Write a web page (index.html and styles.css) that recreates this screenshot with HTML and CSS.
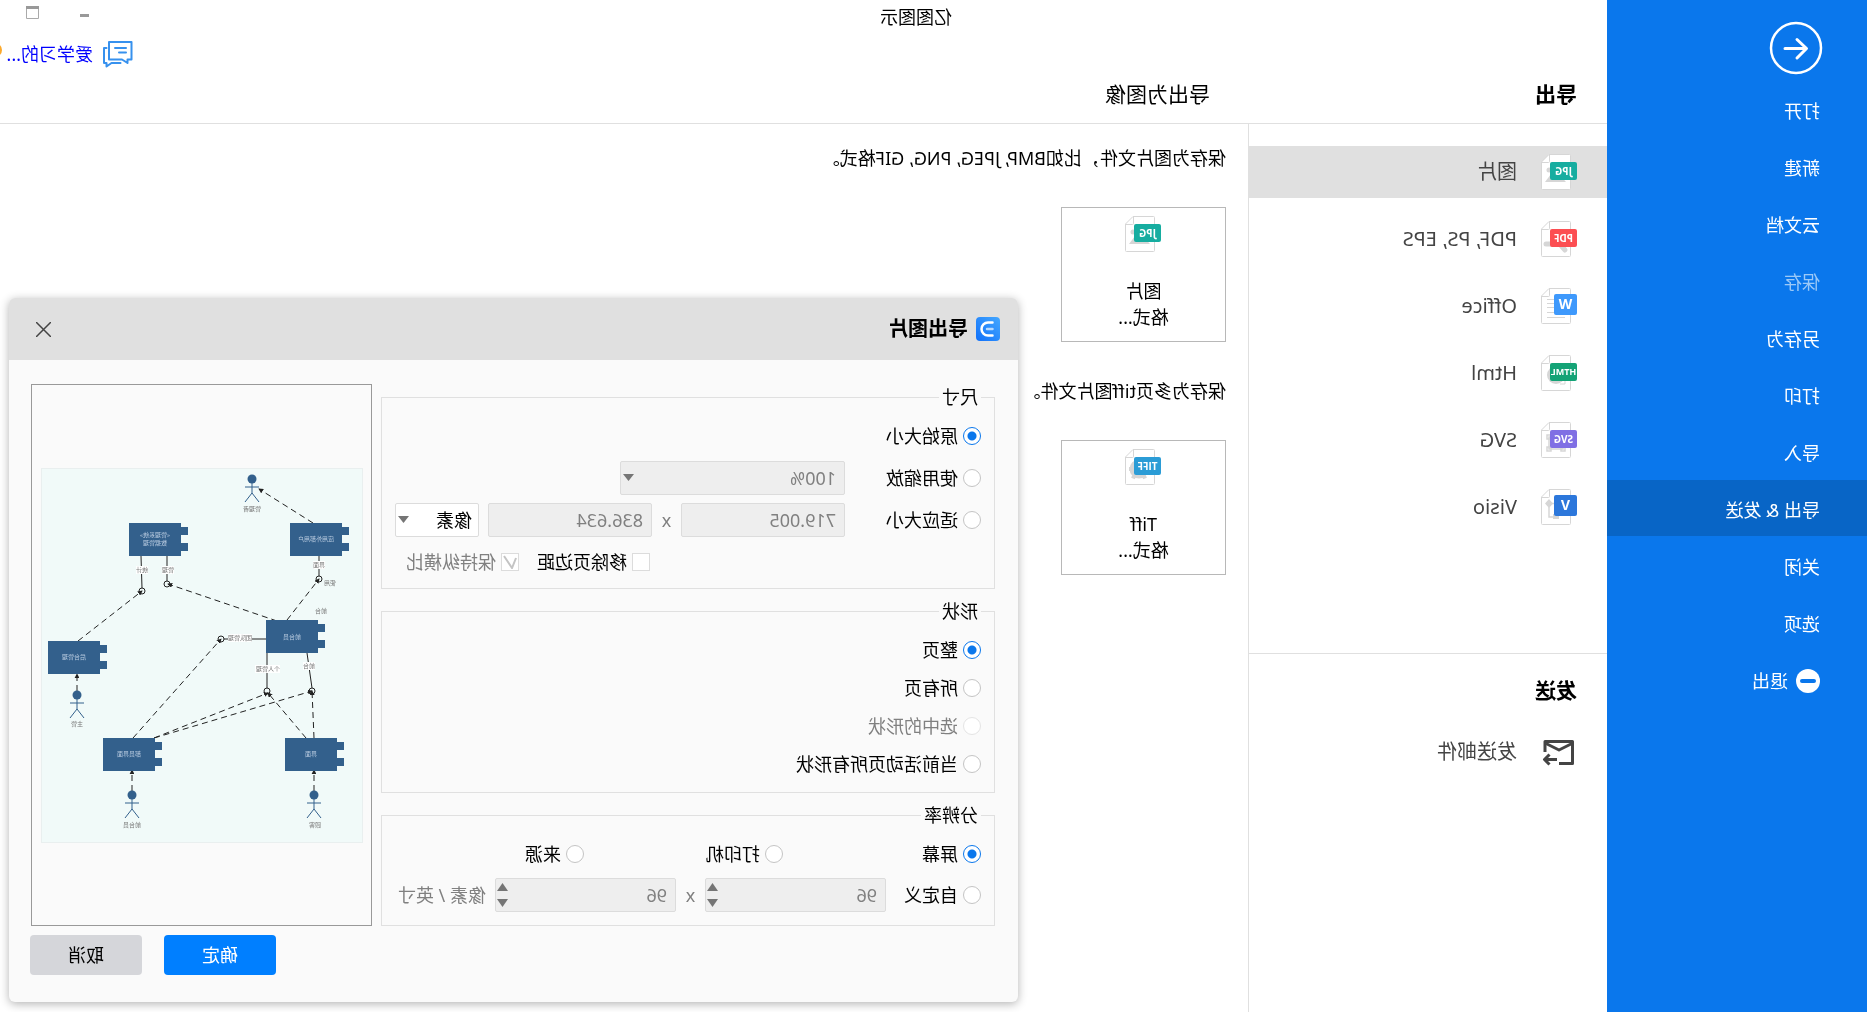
FILE: index.html
```html
<!DOCTYPE html>
<html lang="zh-CN">
<head>
<meta charset="utf-8">
<title>亿图图示</title>
<link rel="stylesheet" href="styles.css">
</head>
<body>
<svg class="defs" width="0" height="0" aria-hidden="true">
  <defs>
    <g id="sheet">
      <path d="M7.500.500H28L35.500 8V34.500a1 1 0 0 1-1 1H7.500a1 1 0 0 1-1-1V1.500a1 1 0 0 1 1-1Z" fill="#fff" stroke="#d6d6d6"/>
      <path d="M27.500.500V7.500a1 1 0 0 0 1 1H35.500" fill="none" stroke="#d6d6d6"/>
    </g>
    <g id="photo" fill="#d6d6d6"><circle cx="28" cy="16" r="2.500"/><path d="M11 28l7-8 5 4 3-4 6 8Z"/></g>
    <g id="caret"><path d="M0 0H11L5.500 7Z" fill="#757575"/></g>
    <g id="actor" fill="none" stroke="#33608c">
      <circle r="4.500" fill="#33608c" stroke="none"/>
      <path d="M0 4V14M-7 8H7M0 14L-7 23M0 14L7 23"/>
    </g>
    <g id="node" fill="#33608c"><path d="M0 0H52V33H0ZM-7 4H0V12H-7ZM-7 20H0V28H-7Z"/></g>
    <marker id="tip" viewBox="0 0 6 6" refX="5" refY="3" markerWidth="5" markerHeight="5" orient="auto"><path d="M0 0L6 3L0 6Z" fill="#222"/></marker>
    <linearGradient id="brand" x1="0" y1="0" x2="1" y2="1"><stop offset="0" stop-color="#45a8ff"/><stop offset="1" stop-color="#1070fa"/></linearGradient>
  </defs>
</svg>

<div class="app">
  <nav class="sidebar">
    <button class="back" type="button" aria-label="返回">
      <svg width="54" height="54" viewBox="0 0 54 54" fill="none" stroke="#fff" stroke-width="3" stroke-linecap="round" stroke-linejoin="round"><circle cx="27" cy="27" r="25" stroke-width="2.500"/><path d="M38 27.500H17M26 18.500L16.500 27.500L26 37"/></svg>
    </button>
    <a class="nav-item" href="#">打开</a>
    <a class="nav-item" href="#">新建</a>
    <a class="nav-item" href="#">云文档</a>
    <a class="nav-item nav-off" href="#">保存</a>
    <a class="nav-item" href="#">另存为</a>
    <a class="nav-item" href="#">打印</a>
    <a class="nav-item" href="#">导入</a>
    <a class="nav-item nav-on" href="#">导出 &amp; 发送</a>
    <a class="nav-item" href="#">关闭</a>
    <a class="nav-item" href="#">选项</a>
    <a class="nav-item" href="#"><svg width="24" height="24" viewBox="0 0 24 24"><circle cx="12" cy="12" r="12" fill="#fff"/><rect x="4" y="10" width="16" height="4" rx="2" fill="#0a77ec"/></svg>退出</a>
  </nav>

  <div class="main">
    <header>
      <div class="titlebar">
        <div class="title">亿图图示</div>
        <div class="controls">
          <button type="button" aria-label="最小化"><svg width="13" height="13" viewBox="0 0 13 13"><path d="M2 9.500H11" stroke="#999" stroke-width="3"/></svg></button>
          <button type="button" aria-label="最大化"><svg width="13" height="13" viewBox="0 0 13 13"><path d="M.5 1V12.500H12.500V1" fill="none" stroke="#aaa"/><path d="M0 1.500H13" stroke="#999" stroke-width="3"/></svg></button>
        </div>
      </div>
      <div class="userbar">
        <svg width="30" height="27" viewBox="0 0 30 27" fill="none" stroke="#3791ee" stroke-width="2" stroke-linejoin="round" stroke-linecap="round"><path d="M1.500 1H24V18.500H11L5.500 22V18.500H1.500ZM7 7H18M7 11.500H14M26.500 7H29V22H26.500V25.500L21.500 22H12.500"/></svg>
        <a href="#">爱学习的...</a>
        <span class="vip"></span>
      </div>
      <div class="headings">
        <h1>导出</h1>
        <h2>导出为图像</h2>
      </div>
    </header>

    <div class="columns">
      <aside class="formats">
        <div class="group">
          <a class="format format-on" href="#"><svg width="36" height="36" viewBox="0 0 36 36"><use href="#sheet"/><use href="#photo"/><rect y="8" width="27" height="18" rx="2" fill="#16ada0"/><text class="tag" x="13.500" y="20.500">JPG</text></svg>图片</a>
          <a class="format" href="#"><svg width="36" height="36" viewBox="0 0 36 36"><use href="#sheet"/><path d="M12 29l8-9M26 23h5" stroke="#d6d6d6" stroke-width="5" stroke-linecap="round"/><rect y="8" width="27" height="18" rx="2" fill="#fc4e52"/><text class="tag" x="13.500" y="20.500">PDF</text></svg>PDF, PS, EPS</a>
          <a class="format" href="#"><svg width="36" height="36" viewBox="0 0 36 36"><use href="#sheet"/><path d="M12 11.500H30M12 15.500H30M12 19.500H30M12 24.500H30M12 29.500H30" stroke="#d6d6d6"/><rect y="6" width="23" height="21" rx="2" fill="#3e99fc"/><text class="tag tag-big" x="11.500" y="21">W</text></svg>Office</a>
          <a class="format" href="#"><svg width="36" height="36" viewBox="0 0 36 36"><use href="#sheet"/><circle cx="21" cy="20" r="9" fill="#d6d6d6"/><path d="M12 20V29H17" fill="none" stroke="#d6d6d6"/><rect y="8" width="27" height="18" rx="2" fill="#14a376"/><text class="tag tag-small" x="13.500" y="20">HTML</text></svg>Html</a>
          <a class="format" href="#"><svg width="36" height="36" viewBox="0 0 36 36"><use href="#sheet"/><path d="M14 15H28V27H14ZM26 13h4v4h-4ZM12 25h4v4h-4ZM26 25h4v4h-4Z" fill="#fff" stroke="#d6d6d6" stroke-width="1.500"/><rect y="8" width="27" height="18" rx="2" fill="#806fe4"/><text class="tag" x="13.500" y="20.500">SVG</text></svg>SVG</a>
          <a class="format" href="#"><svg width="36" height="36" viewBox="0 0 36 36"><use href="#sheet"/><path d="M22 14.500H28V28H20" fill="none" stroke="#d6d6d6" stroke-width="1.500"/><path d="M28 10l4 4.500-4 4.500-4-4.500ZM18 25h6v5h-6Z" fill="#d6d6d6"/><rect y="6" width="23" height="21" rx="2" fill="#2c77db"/><text class="tag tag-big" x="11.500" y="21">V</text></svg>Visio</a>
        </div>
        <div class="send">
          <h1>发送</h1>
          <a class="format" href="#"><svg width="36" height="36" viewBox="0 0 36 36" fill="none" stroke="#444" stroke-width="3" stroke-linejoin="round"><path d="M18 29.500H4.500V7.500H32V18"/><path d="M5 9.500L18 16L31 9.500"/><path d="M20 25.500H32M27.500 20.500L32.500 25.500L27.500 30.500"/></svg>发送邮件</a>
        </div>
      </aside>

      <section class="content">
        <p>保存为图片文件，比如BMP, JPEG, PNG, GIF格式。</p>
        <button class="tile" type="button">
          <svg width="36" height="36" viewBox="0 0 36 36"><use href="#sheet"/><use href="#photo"/><rect y="8" width="27" height="18" rx="2" fill="#16ada0"/><text class="tag" x="13.500" y="20.500">JPG</text></svg>
          <span>图片<br>格式...</span>
        </button>
        <p>保存为多页tiff图片文件。</p>
        <button class="tile" type="button">
          <svg width="36" height="36" viewBox="0 0 36 36"><use href="#sheet"/><circle cx="22" cy="20" r="7" fill="none" stroke="#d6d6d6" stroke-width="5"/><path d="M17 27l-1 2.500M27 27l1 2.500M29 20h3" stroke="#d6d6d6" stroke-width="4"/><rect y="8" width="27" height="18" rx="2" fill="#2b9cd6"/><text class="tag" x="13.500" y="20.500">TIFF</text></svg>
          <span>Tiff<br>格式...</span>
        </button>
      </section>
    </div>
  </div>

  <form class="dialog" role="dialog" aria-labelledby="dialog-title">
    <div class="dialog-head">
      <svg width="24" height="24" viewBox="0 0 24 24" fill="none" stroke-linecap="round"><rect width="24" height="24" rx="4" fill="url(#brand)"/><path d="M7.500 5.500H12A6.500 6.500 0 0 1 12 18.500H7.500" stroke="#fff" stroke-width="2.500"/><path d="M7.500 12H13" stroke="#b8daff" stroke-width="2.500"/></svg>
      <h2 id="dialog-title">导出图片</h2>
      <button class="close" type="button" aria-label="关闭"><svg width="15" height="15" viewBox="0 0 15 15"><path d="M0 0L15 15M15 0L0 15" stroke="#444" stroke-width="1.500"/></svg></button>
    </div>
    <div class="dialog-body">
      <div class="options">
        <fieldset class="size">
          <legend>尺寸</legend>
          <div class="row"><label class="choice"><input type="radio" name="size" checked>原始大小</label></div>
          <div class="row">
            <label class="choice"><input type="radio" name="size">使用缩放</label>
            <span class="select zoom"><select aria-label="缩放" disabled><option>100%</option></select><svg width="11" height="8"><use href="#caret"/></svg></span>
          </div>
          <div class="row">
            <label class="choice"><input type="radio" name="size">适应大小</label>
            <input class="field" type="text" value="719.005" aria-label="宽度" disabled>
            <span class="times">x</span>
            <input class="field" type="text" value="836.634" aria-label="高度" disabled>
            <span class="select unit"><select aria-label="单位"><option>像素</option></select><svg width="11" height="8"><use href="#caret"/></svg></span>
          </div>
          <div class="row checks">
            <label><input type="checkbox">移除页边距</label>
            <label class="off"><input type="checkbox" disabled><svg class="tick" width="14" height="14" viewBox="0 0 14 14"><path d="M1 3L5 13L13 1" fill="none" stroke="#c4c4c4" stroke-width="2"/></svg>保持纵横比</label>
          </div>
        </fieldset>
        <fieldset class="shape">
          <legend>形状</legend>
          <label><input type="radio" name="shape" checked>整页</label>
          <label><input type="radio" name="shape">所有页</label>
          <label class="off"><input type="radio" name="shape" disabled>选中的形状</label>
          <label><input type="radio" name="shape">当前活动页所有形状</label>
        </fieldset>
        <fieldset class="dpi">
          <legend>分辨率</legend>
          <div class="row thirds">
            <label><input type="radio" name="dpi" checked>屏幕</label>
            <label><input type="radio" name="dpi">打印机</label>
            <label><input type="radio" name="dpi">来源</label>
          </div>
          <div class="row">
            <label class="choice"><input type="radio" name="dpi">自定义</label>
            <span class="spin"><input class="field" type="number" value="96" aria-label="水平分辨率" disabled><svg width="11" height="24" viewBox="0 0 11 24" fill="#757575"><path d="M0 8H11L5.500 0ZM0 16H11L5.500 24Z"/></svg></span>
            <span class="times">x</span>
            <span class="spin"><input class="field" type="number" value="96" aria-label="垂直分辨率" disabled><svg width="11" height="24" viewBox="0 0 11 24" fill="#757575"><path d="M0 8H11L5.500 0ZM0 16H11L5.500 24Z"/></svg></span>
            <span class="per">像素 / 英寸</span>
          </div>
        </fieldset>
      </div>
      <div class="preview">
        <svg class="diagram" width="322" height="375" viewBox="0 0 322 375">
          <rect x=".5" y=".5" width="321" height="374" fill="#f1faf9" stroke="#e9efef"/>
          <g fill="none" stroke="#222">
            <path d="M222 88L221 120M196 88V114M44 88V108M97 171H139M96 185V220M56 185L51 220"/>
            <g fill="#f1faf9"><circle cx="221" cy="123" r="3"/><circle cx="196" cy="116" r="3"/><circle cx="44" cy="111" r="3"/><circle cx="142" cy="171" r="3"/><circle cx="96" cy="223" r="3"/><circle cx="51" cy="223" r="3"/></g>
            <g stroke-dasharray="6 4">
              <path d="M50 55L104 21" marker-end="url(#tip)"/>
              <path d="M285 173L221 123" marker-end="url(#tip)"/>
              <path d="M86 153L195 116" marker-end="url(#tip)"/>
              <path d="M76 152L44 111" marker-end="url(#tip)"/>
              <path d="M230 270L142 171" marker-end="url(#tip)"/>
              <path d="M209 270L95 225" marker-end="url(#tip)"/>
              <path d="M209 270L51 223" marker-end="url(#tip)"/>
              <path d="M57 270L95 225" marker-end="url(#tip)"/>
              <path d="M49 270L51 223" marker-end="url(#tip)"/>
              <path d="M286 223V206" marker-end="url(#tip)"/>
              <path d="M231 323V302" marker-end="url(#tip)"/>
              <path d="M49 323V302" marker-end="url(#tip)"/>
            </g>
          </g>
          <use href="#node" x="182" y="55"/><use href="#node" x="21" y="55"/><use href="#node" x="45" y="152"/>
          <use href="#node" x="263" y="173"/><use href="#node" x="208" y="270"/><use href="#node" x="26" y="270"/>
          <use href="#actor" x="111" y="11"/><use href="#actor" x="286" y="227"/><use href="#actor" x="231" y="327"/><use href="#actor" x="49" y="327"/>
          <g fill="#fff">
            <rect x="215" y="98" width="12" height="8"/><rect x="189" y="98" width="12" height="8"/><rect x="38" y="93" width="12" height="8"/>
            <rect x="111" y="166" width="24" height="8"/><rect x="83" y="197" width="25" height="8"/><rect x="48" y="194" width="12" height="8"/>
          </g>
          <g class="node-text">
            <text x="208" y="69">«管理系统»</text><text x="208" y="77">数据管理</text><text x="47" y="73">应用外部用户</text>
            <text x="71" y="171">前台员</text><text x="289" y="191">后台管理</text><text x="234" y="288">部员界面</text><text x="52" y="288">界面</text>
          </g>
          <g class="line-text">
            <text x="111" y="43">管理者</text><text x="286" y="258">主管</text><text x="231" y="359">前台员</text><text x="48" y="359">顾客</text>
            <text x="221" y="104">统计</text><text x="195" y="104">管理</text><text x="44" y="99">界面</text><text x="33" y="117">使用</text>
            <text x="42" y="145">前台</text><text x="123" y="172">团队管理</text><text x="95" y="203">个人管理</text><text x="54" y="200">前台</text>
          </g>
        </svg>
      </div>
    </div>
    <div class="dialog-foot">
      <button class="ok" type="submit">确定</button>
      <button class="cancel" type="button">取消</button>
    </div>
  </form>
</div>
</body>
</html>
```
FILE: styles.css
```css
* { box-sizing: border-box; }

body {
  margin: 0;
  overflow: hidden;
  background: #fff;
  color: #000;
  font: 18px/26px "Noto Sans", "Noto Sans CJK SC", sans-serif;
}

h1, h2, p { margin: 0; }
h1, h2 { font-size: 21px; line-height: 30px; }
a { color: inherit; text-decoration: none; }
button { padding: 0; border: 0; background: none; color: inherit; font: inherit; }
svg { flex: none; }
.defs { position: absolute; }

/* The whole window is laid out right-facing and shown mirrored. */
.app {
  position: relative;
  display: flex;
  min-height: 100vh;
  overflow: hidden;
  transform: scaleX(-1);
}

/* Sidebar */
.sidebar {
  flex: none;
  display: flex;
  flex-direction: column;
  gap: 1px;
  width: 260px;
  background: #0a77ec;
  color: #fff;
}
.back { width: 54px; height: 54px; margin: 21px 0 5px 44px; }
.back svg { display: block; }
.nav-item {
  display: flex;
  align-items: center;
  gap: 8px;
  height: 56px;
  padding: 4px 47px 0;
}
.nav-on { background: #0865c6; }
.nav-off { color: #9cc9f7; }

/* Header */
.main { flex: 1; display: flex; flex-direction: column; min-width: 0; }
.titlebar { display: flex; height: 35px; }
.title { flex: 1; text-align: center; line-height: 34px; }
.controls { display: flex; gap: 39px; width: 225px; padding: 6px 0 0 134px; }
.controls button { width: 13px; height: 13px; }
.controls svg { display: block; }
.userbar {
  display: flex;
  align-items: center;
  justify-content: flex-end;
  gap: 10px;
  height: 38px;
}
.userbar a { width: 86px; color: #00f; white-space: nowrap; }
.vip { width: 14px; height: 14px; margin: -8px -12px 0 -5px; border-radius: 50%; background: #fba92c; }
.headings {
  display: grid;
  grid-template-columns: 367px 1fr;
  height: 51px;
  padding: 6px 30px 0;
  border-bottom: 1px solid #e0e0e0;
}
.headings h2 { font-weight: 400; }

/* Format list */
.columns { flex: 1; display: flex; }
.formats { flex: none; width: 359px; border-right: 1px solid #e0e0e0; }
.group {
  display: flex;
  flex-direction: column;
  gap: 15px;
  min-height: 530px;
  padding-top: 22px;
  border-bottom: 1px solid #e0e0e0;
}
.format {
  display: flex;
  align-items: center;
  gap: 24px;
  height: 52px;
  padding: 0 30px;
  color: #444;
  font-size: 20px;
}
.format-on { background: #e0e0e0; }
.send h1 { padding: 21px 30px 0; }
.send .format { margin-top: 21px; }
.tag { fill: #fff; font: 700 10px "Open Sans", sans-serif; text-anchor: middle; }
.tag-big { font-size: 14px; }
.tag-small { font-size: 9px; }

/* Export targets */
.content { flex: 1; padding: 21px 22px; }
.tile {
  display: flex;
  flex-direction: column;
  align-items: center;
  gap: 26px;
  width: 165px;
  height: 135px;
  margin: 36px 0;
  padding-top: 8px;
  border: 1px solid #b8b8b8;
  line-height: 26px;
}

/* Export dialog, floating above the page */
.dialog {
  position: absolute;
  top: 298px;
  right: 9px;
  width: 1009px;
  border-radius: 6px;
  background: #fafafa;
  box-shadow: 0 2px 10px rgba(0, 0, 0, .3);
}
.dialog-head {
  display: flex;
  align-items: center;
  gap: 8px;
  height: 62px;
  padding: 0 27px 0 18px;
  border-radius: 6px 6px 0 0;
  background: #e0e0e0;
}
.dialog-head svg { display: block; }
.dialog-head h2 { font-size: 20px; }
.close { margin-left: auto; }
.dialog-body {
  display: grid;
  grid-template-columns: 1fr 341px;
  gap: 9px;
  padding: 24px 22px 9px 23px;
}
.options { display: flex; flex-direction: column; gap: 9px; }

fieldset {
  display: flex;
  flex-direction: column;
  gap: 8px;
  min-width: 0;
  margin: 0;
  padding: 9px 13px;
  border: 1px solid #e0e0e0;
}
legend { padding: 0 3px; }
label { display: flex; align-items: center; gap: 5px; white-space: nowrap; }
.row { display: flex; align-items: center; height: 34px; }
.shape { padding: 11px 13px 13px; }
.shape label { height: 30px; }
.dpi { gap: 7px; padding-bottom: 13px; }
.size .choice { width: 136px; }
.dpi .choice { width: 95px; }
.checks { gap: 18px; padding-left: 331px; }
.thirds { display: grid; grid-template-columns: 198px 199px 1fr; }
.off, .per, .times { color: #808080; }
.times { width: 29px; text-align: center; }
.per { margin-left: 9px; white-space: nowrap; }

input[type="radio"],
input[type="checkbox"] {
  appearance: none;
  flex: none;
  width: 18px;
  height: 18px;
  margin: 0;
  border: 1px solid #c4c4c4;
  background: #fff;
}
input[type="radio"] { border-radius: 50%; }
input[type="radio"]:checked {
  border-color: #0a77ec;
  background: radial-gradient(circle, #0a77ec 4px, #fff 5px);
}
input[type="radio"]:disabled { border-color: #e4e4e4; }
input[type="checkbox"] { border-color: #dcdcdc; }
.off { position: relative; }
.tick { position: absolute; left: 2px; top: 6px; }

.field, select {
  appearance: none;
  height: 34px;
  margin: 0;
  padding: 0 8px;
  border: 1px solid #dcdcdc;
  border-radius: 2px;
  background: #fff;
  color: #000;
  font: inherit;
}
.field { width: 164px; }
.field:disabled, select:disabled { background: #eee; color: #808080; opacity: 1; }
.select, .spin { position: relative; display: flex; }
.select select { width: 100%; }
.select svg { position: absolute; right: 3px; top: 13px; }
.zoom { width: 225px; }
.unit { width: 84px; margin-left: 9px; }
.unit select { padding: 0 6px; }
.spin .field { width: 181px; -moz-appearance: textfield; }
.spin .field::-webkit-inner-spin-button { display: none; }
.spin svg { position: absolute; right: 2px; top: 5px; }

.preview {
  display: flex;
  align-items: center;
  justify-content: center;
  padding-right: 2px;
  border: 1px solid #999;
}
.node-text, .line-text { font-size: 6px; text-anchor: middle; }
.node-text { fill: #b9cbe0; }
.line-text { fill: #777; }

.dialog-foot {
  display: flex;
  justify-content: flex-end;
  gap: 22px;
  padding: 0 21px 27px;
}
.dialog-foot button { width: 112px; height: 40px; border-radius: 4px; }
.ok { background: #007fff; color: #fff; }
.cancel { background: #d5d6da; }
```
